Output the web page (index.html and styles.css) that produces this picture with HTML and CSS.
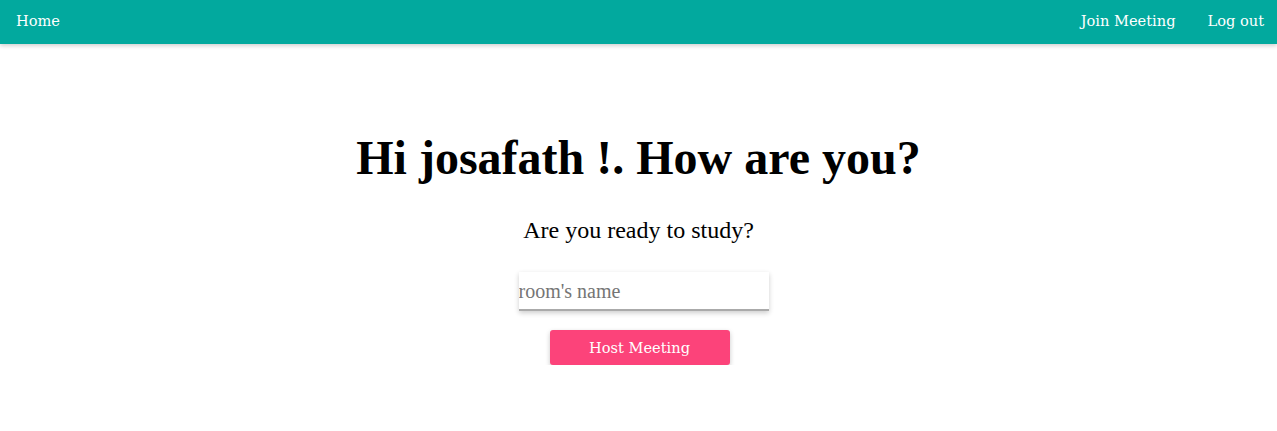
FILE: index.html
```html
<!DOCTYPE html>
<html>
<head>
<meta charset="utf-8">
<link rel="stylesheet" href="styles.css">
</head>
<body>
<nav class="topbar">
  <a class="nav-link" href="#">Home</a>
  <div class="nav-right">
    <a class="nav-link" href="#">Join Meeting</a>
    <a class="nav-link" href="#">Log out</a>
  </div>
</nav>
<main class="content">
  <h1 class="title">Hi josafath !. How are you?</h1>
  <p class="subtitle">Are you ready to study?</p>
  <input class="room-input" type="text" placeholder="room's name">
  <button class="host-btn">Host Meeting</button>
</main>
</body>
</html>
```

FILE: styles.css
```css
body {
  margin: 0;
  font-family: "Liberation Serif", "Times New Roman", serif;
  background: #fff;
}
.topbar {
  height: 44px;
  background: #02a99e;
  display: flex;
  align-items: center;
  justify-content: space-between;
  padding: 0 13px 4px 16px;
  box-sizing: border-box;
  box-shadow: 0 2px 4px rgba(0,0,0,0.18);
}
.nav-right {
  display: flex;
  gap: 32px;
}
.nav-link {
  color: #fff;
  text-decoration: none;
  font-family: "DejaVu Serif", serif;
  font-size: 14.6px;
}
.content {
  display: flex;
  flex-direction: column;
  align-items: center;
}
.title {
  margin: 86px 0 0;
  font-size: 48px;
  line-height: 56px;
  font-weight: bold;
}
.subtitle {
  margin: 30px 0 0;
  font-size: 24px;
  line-height: 28px;
}
.room-input {
  margin: 28px 0 0 10px;
  width: 250px;
  height: 39px;
  box-sizing: border-box;
  border: none;
  border-bottom: 2px solid #aaa;
  padding: 2px 0 0;
  font-family: "Liberation Serif", serif;
  font-size: 20px;
  box-shadow: 0 2px 5px rgba(0,0,0,0.2);
  outline: none;
}
.room-input::placeholder {
  color: #757575;
}
.host-btn {
  margin: 19px 0 0 2px;
  width: 180px;
  height: 35px;
  border: none;
  border-radius: 3px;
  background: #fc437a;
  color: #fff;
  font-family: "DejaVu Serif", serif;
  font-size: 14.6px;
  box-shadow: 0 2px 5px rgba(0,0,0,0.22);
}
```
